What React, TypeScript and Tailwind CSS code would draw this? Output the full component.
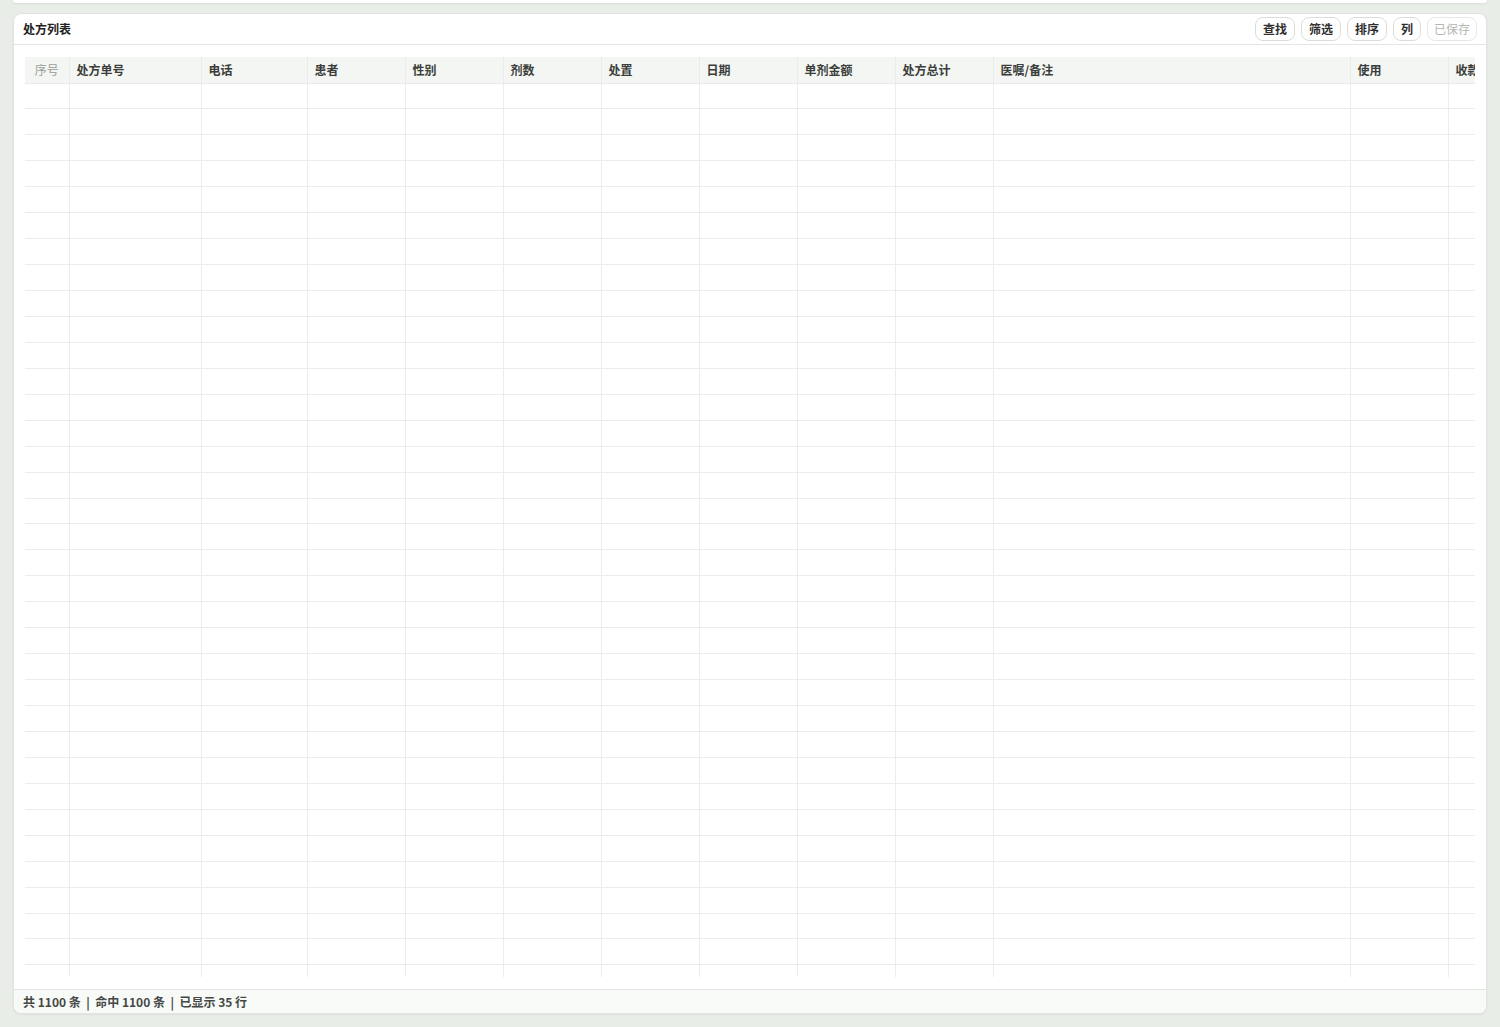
import React from "react";

const COLUMNS: { key: string; label: string; width: number }[] = [
  { key: "no", label: "序号", width: 44 },
  { key: "code", label: "处方单号", width: 132 },
  { key: "phone", label: "电话", width: 106 },
  { key: "patient", label: "患者", width: 98 },
  { key: "sex", label: "性别", width: 98 },
  { key: "doses", label: "剂数", width: 98 },
  { key: "treat", label: "处置", width: 98 },
  { key: "date", label: "日期", width: 98 },
  { key: "unit", label: "单剂金额", width: 98 },
  { key: "total", label: "处方总计", width: 98 },
  { key: "note", label: "医嘱/备注", width: 357 },
  { key: "usage", label: "使用", width: 98 },
  { key: "pay", label: "收款", width: 98 },
];

const ROWS = Array.from({ length: 35 }, (_, i) => i);

const FONT = { fontFamily: '"Noto Sans CJK SC", "Noto Sans", sans-serif' };

function ToolButton({ label, disabled }: { label: string; disabled?: boolean }) {
  return (
    <button
      disabled={disabled}
      className={`h-[24px] rounded-lg border bg-white text-[12px] leading-none ${
        disabled
          ? "px-[6px] border-[#e6eae5] text-[#b3b8b2] font-normal"
          : "px-[7px] border-[#d9dfd8] text-[#2f2f2f] font-bold"
      }`}
    >
      {label}
    </button>
  );
}

export default function App() {
  const tableWidth = COLUMNS.reduce((s, c) => s + c.width, 0);

  return (
    <div className="h-[1027px] w-[1500px] overflow-hidden bg-[#e9ede8] px-[13px]" style={FONT}>
      {/* previous panel, scrolled mostly out of view */}
      <div className="h-[3px] rounded-b-lg bg-white shadow-[0_1px_2px_rgba(0,0,0,0.08)]" />

      {/* 处方列表 */}
      <section className="mt-[10px] flex h-[1001px] flex-col rounded-lg border border-[#dfe4de] bg-white shadow-[0_1px_2px_rgba(0,0,0,0.05)]">
        <header className="flex h-[31px] shrink-0 items-center justify-between border-b border-[#e3e7e2] pl-[9px] pr-[9px]">
          <h2 className="text-[12px] font-bold text-[#222]">处方列表</h2>
          <div className="flex items-center gap-[6px]">
            <ToolButton label="查找" />
            <ToolButton label="筛选" />
            <ToolButton label="排序" />
            <ToolButton label="列" />
            <ToolButton label="已保存" disabled />
          </div>
        </header>

        <div className="flex-1 px-[11px] pt-[12px] pb-[13px] min-h-0">
          <div className="h-[920px] overflow-hidden">
            <table className="table-fixed border-collapse" style={{ width: tableWidth }}>
              <colgroup>
                {COLUMNS.map((c) => (
                  <col key={c.key} style={{ width: c.width }} />
                ))}
              </colgroup>
              <thead>
                <tr className="h-[26px] bg-[#f4f6f3]">
                  {COLUMNS.map((c, i) => (
                    <th
                      key={c.key}
                      className={`border-b border-[#e8ebe7] px-[7px] text-[12px] whitespace-nowrap ${
                        i > 0 ? "border-l" : ""
                      } ${
                        c.key === "no"
                          ? "text-center font-normal text-[#9a9d99]"
                          : "text-left font-bold text-[#3a3d3a]"
                      }`}
                    >
                      {c.label}
                    </th>
                  ))}
                </tr>
              </thead>
              <tbody>
                {ROWS.map((r) => (
                  <tr key={r} className="h-[25.94px]">
                    {COLUMNS.map((c, i) => (
                      <td
                        key={c.key}
                        className={`border-b border-[#ebedea] ${i > 0 ? "border-l" : ""}`}
                      />
                    ))}
                  </tr>
                ))}
              </tbody>
            </table>
          </div>
        </div>

        <footer className="flex h-[24px] shrink-0 items-center rounded-b-lg border-t border-[#e3e7e2] bg-[#f8faf7] px-[9px] text-[12px] font-bold text-[#454845]">
          共 1100 条&nbsp;&nbsp;|&nbsp;&nbsp;命中 1100 条&nbsp;&nbsp;|&nbsp;&nbsp;已显示 35 行
        </footer>
      </section>
    </div>
  );
}
